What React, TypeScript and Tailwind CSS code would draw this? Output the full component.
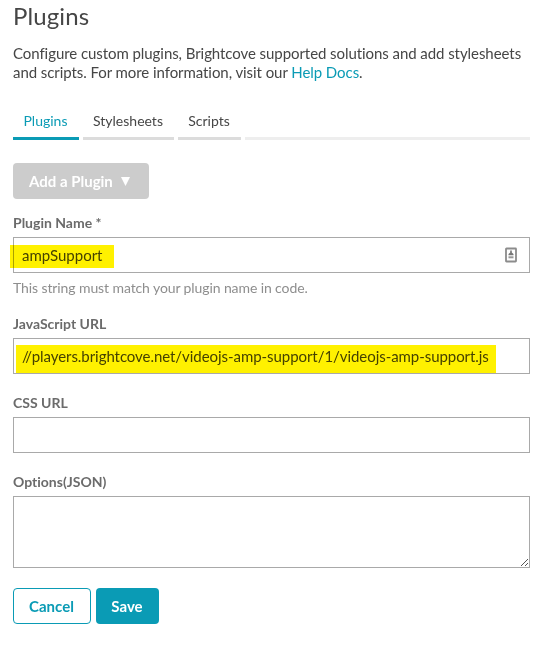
import React from 'react';

const inputClass =
  'block h-9 w-full border border-[#a9a9a9] bg-white px-2 pb-px text-[15px] text-[#464646] outline-none';

function Label({ htmlFor, children }: { htmlFor: string; children: React.ReactNode }) {
  return (
    <label htmlFor={htmlFor} className="block h-6 text-[14px] leading-5 font-bold text-[#6b6b6b]">
      {children}
    </label>
  );
}

function ContactIcon() {
  return (
    <svg className="absolute top-2.5 right-3 h-4 w-[14px]" viewBox="0 0 14 16" fill="none">
      <rect x="2" y="1.5" width="10" height="13" rx="0.5" stroke="#8c8c8c" strokeWidth="1.8" />
      <path d="M6.2 3.5h1.6v2L9.5 7v1.2h-5V7l1.7-1.5z" fill="#777" />
      <path d="M4.5 10.3h5" stroke="#999" strokeWidth="2" />
    </svg>
  );
}

export default function App() {
  return (
    <main className="h-[648px] w-[539px] bg-white pr-[9px] pl-[13px] font-['Lato',sans-serif] text-[#464646] [font-variant-ligatures:none]">
      <h1 className="h-11 text-[24px] leading-[31px] tracking-[0.12px]">Plugins</h1>
      <p className="h-[59px] text-[15px] leading-[19px] tracking-[-0.065px] whitespace-nowrap">
        Configure custom plugins, Brightcove supported solutions and add stylesheets
        <br />
        and scripts. For more information, visit our{' '}
        <a className="text-[#0a9bb5]">Help Docs</a>.
      </p>

      <nav className="flex h-[37px] gap-1 text-center text-[14px] leading-9">
        <a className="w-[66px] border-b-3 border-[#0a9bb5] pr-px text-[#0a9bb5]">Plugins</a>
        <a className="w-[91px] border-b-3 border-[#dcdcdc] pr-px">Stylesheets</a>
        <a className="w-[63px] border-b-3 border-[#dcdcdc] pr-px">Scripts</a>
        <span className="flex-1 border-b-3 border-[#eeeeee]" />
      </nav>

      <button className="mt-[23px] flex h-9 w-[136px] items-center rounded bg-[#cccccc] pl-4 text-[15px] font-bold text-white">
        Add a Plugin
        <svg className="ml-2 h-[9px] w-[9px]" viewBox="0 0 9 9">
          <path d="M0 0h9L4.5 9z" fill="white" />
        </svg>
      </button>

      <div className="mt-3.5">
        <Label htmlFor="name">Plugin Name *</Label>
        <div className="relative">
          <input id="name" className={inputClass} defaultValue="ampSupport" />
          <span className="pointer-events-none absolute top-2 -left-[3px] h-[23px] w-[104px] bg-[#fff100] mix-blend-multiply" />
          <ContactIcon />
        </div>
        <p className="h-[41px] pt-1 text-[14px] leading-[22px] tracking-[-0.1px] text-[#8e8e8e]">
          This string must match your plugin name in code.
        </p>
      </div>

      <div>
        <Label htmlFor="js">JavaScript URL</Label>
        <div className="relative">
          <input
            id="js"
            className={`${inputClass} tracking-[-0.055px]`}
            defaultValue="//players.brightcove.net/videojs-amp-support/1/videojs-amp-support.js"
          />
          <span className="pointer-events-none absolute top-[7px] left-[3px] h-7 w-[480px] bg-[#fff100] mix-blend-multiply" />
        </div>
      </div>

      <div className="mt-[19px]">
        <Label htmlFor="css">CSS URL</Label>
        <input id="css" className={inputClass} />
      </div>

      <div className="mt-[19px]">
        <Label htmlFor="options">Options(JSON)</Label>
        <div className="relative">
          <textarea
            id="options"
            className="block h-[72px] w-full resize-none border border-[#a9a9a9] bg-white outline-none"
          />
          <svg className="absolute right-0.5 bottom-0.5 h-[7px] w-[7px]" viewBox="0 0 7 7" shapeRendering="crispEdges">
            <path
              d="M0 6h1v1H0zM1 5h1v1H1zM2 4h1v1H2zM3 3h1v1H3zM4 2h1v1H4zM5 1h1v1H5zM6 0h1v1H6zM4 6h1v1H4zM5 5h1v1H5zM6 4h1v1H6z"
              fill="#555"
            />
          </svg>
        </div>
      </div>

      <div className="mt-5 flex gap-[5px] text-[15px] font-bold">
        <button className="h-9 w-[78px] rounded border border-[#0a9bb5] bg-white pr-px text-[#0a9bb5]">Cancel</button>
        <button className="h-9 w-[63px] rounded bg-[#0a9bb5] pr-px text-white">Save</button>
      </div>
    </main>
  );
}
